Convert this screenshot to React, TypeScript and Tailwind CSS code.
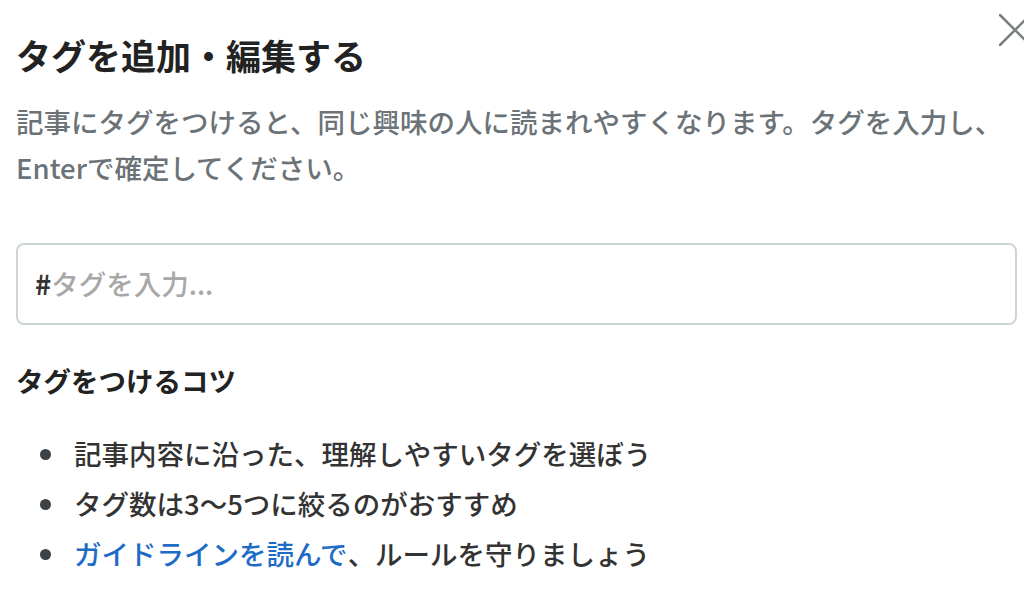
const tips = [
  { text: "記事内容に沿った、理解しやすいタグを選ぼう" },
  { text: "タグ数は3〜5つに絞るのがおすすめ" },
  { link: "ガイドラインを読んで", text: "、ルールを守りましょう" },
];

export default function App() {
  return (
    <div
      className="relative w-[1024px] h-[590px] overflow-hidden bg-white pl-4 pr-[7px]"
      style={{ fontFamily: '"Noto Sans CJK JP", "Noto Sans", sans-serif' }}
    >
      {/* close button, cut off by the right edge */}
      <button className="absolute top-[14px] left-[999px] text-[#7a7f82]">
        <svg width="32" height="32" viewBox="0 0 32 32" stroke="currentColor" strokeWidth="2.6" strokeLinecap="round">
          <path d="M1 1L31 31M31 1L1 31" />
        </svg>
      </button>

      <h1 className="pt-[37px] text-[35px] leading-[35px] font-bold text-[#222]">
        タグを追加・編集する
      </h1>

      <p className="mt-[26px] text-[27.5px] leading-[46px] font-medium text-[#6b7378]">
        記事にタグをつけると、同じ興味の人に読まれやすくなります。タグを入力し、
        <br />
        Enterで確定してください。
      </p>

      <div className="mt-[53px] flex h-[82px] items-center rounded-lg border-2 border-[#cdd5d9] px-[17px] text-[27.5px] font-medium">
        <span className="font-bold text-[#333]">#</span>
        <span className="text-[#a8a8a8]">タグを入力...</span>
      </div>

      <h2 className="mt-[41px] text-[27.5px] leading-[28px] font-bold text-[#222]">
        タグをつけるコツ
      </h2>

      <ul className="mt-[35px]">
        {tips.map((t, i) => (
          <li key={i} className="flex items-center h-[50px] text-[27.5px] font-medium text-[#333]">
            <span className="ml-[24px] mr-[23px] h-[11px] w-[11px] rounded-full bg-[#3d4246]" />
            {t.link && <a className="text-[#1e6bc6]">{t.link}</a>}
            <span>{t.text}</span>
          </li>
        ))}
      </ul>
    </div>
  );
}
